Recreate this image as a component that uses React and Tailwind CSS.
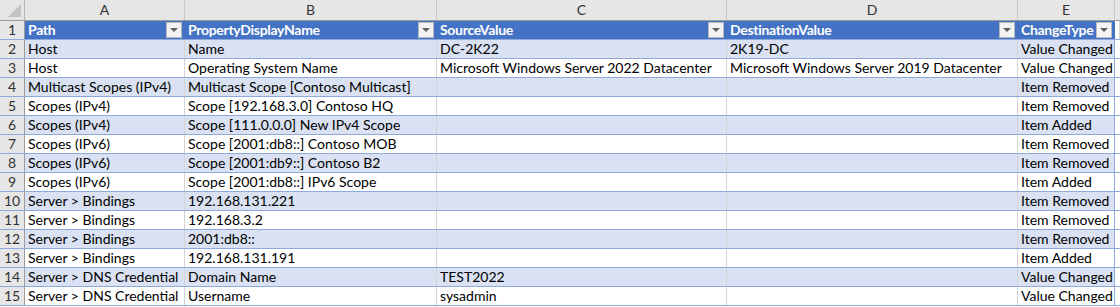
const COLS = [
  { key: "A", w: "w-[160px]" },
  { key: "B", w: "w-[252px]" },
  { key: "C", w: "w-[290px]" },
  { key: "D", w: "w-[291px]" },
  { key: "E", w: "w-[97px]" },
];

const HEAD = ["Path", "PropertyDisplayName", "SourceValue", "DestinationValue", "ChangeType"];

const ROWS = [
  ["Host", "Name", "DC-2K22", "2K19-DC", "Value Changed"],
  ["Host", "Operating System Name", "Microsoft Windows Server 2022 Datacenter", "Microsoft Windows Server 2019 Datacenter", "Value Changed"],
  ["Multicast Scopes (IPv4)", "Multicast Scope [Contoso Multicast]", "", "", "Item Removed"],
  ["Scopes (IPv4)", "Scope [192.168.3.0] Contoso HQ", "", "", "Item Removed"],
  ["Scopes (IPv4)", "Scope [111.0.0.0] New IPv4 Scope", "", "", "Item Added"],
  ["Scopes (IPv6)", "Scope [2001:db8::] Contoso MOB", "", "", "Item Removed"],
  ["Scopes (IPv6)", "Scope [2001:db9::] Contoso B2", "", "", "Item Removed"],
  ["Scopes (IPv6)", "Scope [2001:db8::] IPv6 Scope", "", "", "Item Added"],
  ["Server > Bindings", "192.168.131.221", "", "", "Item Removed"],
  ["Server > Bindings", "192.168.3.2", "", "", "Item Removed"],
  ["Server > Bindings", "2001:db8::", "", "", "Item Removed"],
  ["Server > Bindings", "192.168.131.191", "", "", "Item Added"],
  ["Server > DNS Credential", "Domain Name", "TEST2022", "", "Value Changed"],
  ["Server > DNS Credential", "Username", "sysadmin", "", "Value Changed"],
];

function FilterButton() {
  return (
    <span className="flex h-[16px] w-[16px] shrink-0 items-center justify-center border border-[#b9b9b9] bg-[#f3f3f3]">
      <svg width="8" height="4" viewBox="0 0 8 4">
        <path d="M0 0 L8 0 L4 4 Z" fill="#606060" />
      </svg>
    </span>
  );
}

export default function App() {
  return (
    <div className="h-[307px] w-[1120px] overflow-hidden bg-white font-['Lato','Liberation_Sans',sans-serif] text-[14px] leading-[18px] text-black">
      {/* column letters */}
      <div className="flex h-[21px] border-b border-[#9b9b9b] bg-[#e6e6e6] text-[#333]">
        <div className="relative w-[25px] shrink-0 border-r border-[#b4b4b4]">
          <svg className="absolute bottom-[3px] right-[3px]" width="13" height="13" viewBox="0 0 13 13">
            <path d="M13 0 L13 13 L0 13 Z" fill="#c3c3c3" />
          </svg>
        </div>
        {COLS.map((c) => (
          <div key={c.key} className={`${c.w} flex shrink-0 items-center justify-center border-r border-[#c8c8c8]`}>
            {c.key}
          </div>
        ))}
        <div className="flex-1" />
      </div>

      {/* header row */}
      <div className="flex h-[19px] border-b border-[#8ea9db]">
        <div className="flex w-[25px] shrink-0 items-center justify-center border-r border-[#9b9b9b] bg-[#e6e6e6] text-[#333]">1</div>
        {HEAD.map((h, i) => (
          <div key={h} className={`${COLS[i].w} flex shrink-0 items-center justify-between gap-[2px] border-r border-[#4472c4] bg-[#4472c4] pl-[3px] pr-[2px] font-bold text-white`}>
            <span className="whitespace-nowrap tracking-[-0.3px]">{h}</span>
            <FilterButton />
          </div>
        ))}
        <div className="flex-1 border-r border-[#d4d4d4]" />
      </div>

      {ROWS.map((r, ri) => (
        <div key={ri} className="flex h-[19px] border-b border-[#8ea9db]">
          <div className="flex w-[25px] shrink-0 items-center justify-center border-r border-[#9b9b9b] bg-[#e6e6e6] text-[#333]">{ri + 2}</div>
          {r.map((v, ci) => (
            <div
              key={ci}
              className={`${COLS[ci].w} flex shrink-0 items-center whitespace-nowrap pl-[3px] ${ci === 4 ? "border-r border-[#8ea9db]" : "border-r border-[#d4d4d4]"} ${ri % 2 === 0 ? "bg-[#d9e1f2]" : "bg-white"}`}
            >
              {v}
            </div>
          ))}
          <div className="flex-1" />
        </div>
      ))}
    </div>
  );
}
